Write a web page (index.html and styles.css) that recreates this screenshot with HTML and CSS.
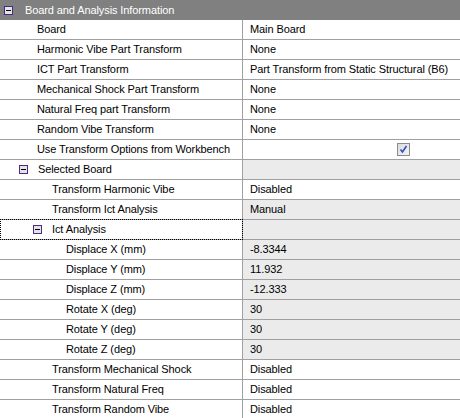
FILE: index.html
```html
<!DOCTYPE html>
<html>
<head>
<meta charset="utf-8">
<link rel="stylesheet" href="styles.css">
</head>
<body>
<div class="grid">
  <div class="hdr"><span class="tog hdr-tog"></span><span class="hdr-text">Board and Analysis Information</span></div>
  <div class="row"><div class="k l1">Board</div><div class="v">Main Board</div></div>
  <div class="row"><div class="k l1">Harmonic Vibe Part Transform</div><div class="v">None</div></div>
  <div class="row"><div class="k l1">ICT Part Transform</div><div class="v">Part Transform from Static Structural (B6)</div></div>
  <div class="row"><div class="k l1">Mechanical Shock Part Transform</div><div class="v">None</div></div>
  <div class="row"><div class="k l1">Natural Freq part Transform</div><div class="v">None</div></div>
  <div class="row"><div class="k l1">Random Vibe Transform</div><div class="v">None</div></div>
  <div class="row"><div class="k l1">Use Transform Options from Workbench</div><div class="v chk-cell"><span class="chk"><svg width="9" height="9" viewBox="0 0 9 9"><path d="M1.5 4.5 L3.5 7 L7.5 1" fill="none" stroke="#2b4fc4" stroke-width="1.6"/></svg></span></div></div>
  <div class="row"><div class="k g1"><span class="tog"></span>Selected Board</div><div class="v ro"></div></div>
  <div class="row"><div class="k l2">Transform Harmonic Vibe</div><div class="v">Disabled</div></div>
  <div class="row"><div class="k l2">Transform Ict Analysis</div><div class="v ro">Manual</div></div>
  <div class="row"><div class="k g2 focus"><span class="tog"></span>Ict Analysis</div><div class="v ro"></div></div>
  <div class="row"><div class="k l3">Displace X (mm)</div><div class="v ro">-8.3344</div></div>
  <div class="row"><div class="k l3">Displace Y (mm)</div><div class="v ro">11.932</div></div>
  <div class="row"><div class="k l3">Displace Z (mm)</div><div class="v ro">-12.333</div></div>
  <div class="row"><div class="k l3">Rotate X (deg)</div><div class="v ro">30</div></div>
  <div class="row"><div class="k l3">Rotate Y (deg)</div><div class="v ro">30</div></div>
  <div class="row"><div class="k l3">Rotate Z (deg)</div><div class="v ro">30</div></div>
  <div class="row"><div class="k l2">Transform Mechanical Shock</div><div class="v">Disabled</div></div>
  <div class="row"><div class="k l2">Transform Natural Freq</div><div class="v">Disabled</div></div>
  <div class="row"><div class="k l2">Transform Random Vibe</div><div class="v">Disabled</div></div>
</div>
</body>
</html>
```
FILE: styles.css
```css
html, body {
  margin: 0;
  padding: 0;
  background: #fff;
}
.grid {
  width: 460px;
  font-family: "Liberation Sans", Arial, sans-serif;
  font-size: 11px;
  letter-spacing: -0.1px;
  color: #000;
}
.hdr {
  height: 20px;
  background: #808080;
  color: #fff;
  display: flex;
  align-items: center;
  padding-left: 4px;
  box-sizing: border-box;
}
.hdr-text {
  margin-left: 12px;
}
.row {
  display: grid;
  grid-template-columns: 243px 1fr;
  height: 20px;
  box-sizing: border-box;
  border-bottom: 1px solid #a0a0a0;
}
.k {
  border-right: 1px solid #a0a0a0;
  line-height: 19px;
  white-space: nowrap;
  display: flex;
  align-items: center;
  position: relative;
}
.v {
  line-height: 19px;
  padding-left: 7px;
  white-space: nowrap;
  overflow: hidden;
}
.ro {
  background: #ebebeb;
}
.l1 { padding-left: 37px; }
.l2 { padding-left: 52px; }
.l3 { padding-left: 66px; }
.g1 { padding-left: 19px; }
.g2 { padding-left: 33px; }
.g1 .tog, .g2 .tog { margin-right: 10px; }
.tog {
  width: 9px;
  height: 9px;
  box-sizing: border-box;
  border: 1px solid #4b2a85;
  background: #e4e4e4;
  position: relative;
  flex: none;
}
.tog::after {
  content: "";
  position: absolute;
  left: 1px;
  top: 3px;
  width: 5px;
  height: 1px;
  background: #000;
}
.focus::before {
  content: "";
  position: absolute;
  left: 0;
  top: -1px;
  right: -1px;
  bottom: -1px;
  border: 1px dotted #000;
  pointer-events: none;
}
.chk-cell {
  display: flex;
  align-items: center;
  padding-left: 154px;
}
.chk {
  width: 13px;
  height: 13px;
  box-sizing: border-box;
  border: 1px solid #8c8c8c;
  background: linear-gradient(135deg, #dcdcdc, #f4f4f4);
  display: flex;
  align-items: center;
  justify-content: center;
}
```
